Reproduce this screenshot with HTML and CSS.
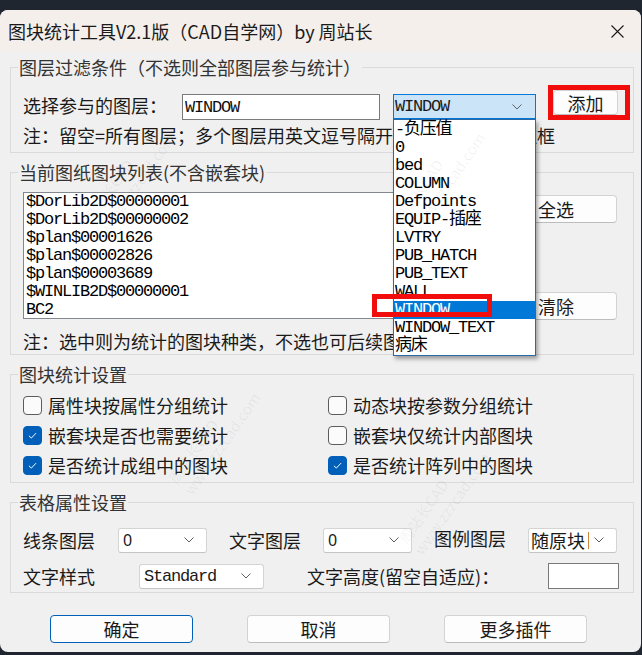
FILE: index.html
```html
<!DOCTYPE html>
<html lang="zh-CN">

<head>
    <meta charset="UTF-8">
    <meta name="viewport" content="width=device-width, initial-scale=1.0">
    <title>图块统计工具V2.1版</title>
    <link rel="stylesheet" href="styles.css">
</head>

<body>
    <div class="window">
        <div class="titlebar">
            <span class="title">图块统计工具V2.1版（CAD自学网）by 周站长</span>
            <svg class="close" viewBox="0 0 13 13"><path d="M0.5 0.5L12.5 12.5M12.5 0.5L0.5 12.5" /></svg>
        </div>

        <div class="content">
            <fieldset class="group g-filter">
                <legend>图层过滤条件（不选则全部图层参与统计）</legend>
                <div class="layer-row">
                    <span class="lbl">选择参与的图层：</span>
                    <input class="text-input" type="text" value="WINDOW">
                    <div class="combo combo-open">
                        <span class="mono">WINDOW</span>
                        <svg class="chev" viewBox="0 0 10 6"><path d="M0.5 0.5L5 5L9.5 0.5" /></svg>
                        <ul class="dropdown">
                            <li>-负压值</li>
                            <li>0</li>
                            <li>bed</li>
                            <li>COLUMN</li>
                            <li>Defpoints</li>
                            <li>EQUIP-插座</li>
                            <li>LVTRY</li>
                            <li>PUB_HATCH</li>
                            <li>PUB_TEXT</li>
                            <li>WALL</li>
                            <li class="selected">WINDOW<span class="mark mark-item"></span></li>
                            <li>WINDOW_TEXT</li>
                            <li>病床</li>
                        </ul>
                    </div>
                    <button class="btn btn-add">添加<span class="mark mark-add"></span></button>
                </div>
                <div class="note">注：留空=所有图层；多个图层用英文逗号隔开，也可用右侧下拉框</div>
            </fieldset>

            <fieldset class="group g-blocks">
                <legend>当前图纸图块列表(不含嵌套块)</legend>
                <div class="blocks-row">
                    <ul class="listbox">
                        <li>$DorLib2D$00000001</li>
                        <li>$DorLib2D$00000002</li>
                        <li>$plan$00001626</li>
                        <li>$plan$00002826</li>
                        <li>$plan$00003689</li>
                        <li>$WINLIB2D$00000001</li>
                        <li>BC2</li>
                    </ul>
                    <div class="side-btns">
                        <button class="btn">全选</button>
                        <button class="btn">清除</button>
                    </div>
                </div>
                <div class="note note-blocks">注：选中则为统计的图块种类，不选也可后续图中框选</div>
            </fieldset>

            <fieldset class="group g-stats">
                <legend>图块统计设置</legend>
                <div class="checks">
                    <label class="check"><span class="box"></span>属性块按属性分组统计</label>
                    <label class="check"><span class="box"></span>动态块按参数分组统计</label>
                    <label class="check"><span class="box on"><svg viewBox="0 0 19 19"><path d="M5.5 9.8L8.2 12.4L13.5 6.8" /></svg></span>嵌套块是否也需要统计</label>
                    <label class="check"><span class="box"></span>嵌套块仅统计内部图块</label>
                    <label class="check"><span class="box on"><svg viewBox="0 0 19 19"><path d="M5.5 9.8L8.2 12.4L13.5 6.8" /></svg></span>是否统计成组中的图块</label>
                    <label class="check"><span class="box on"><svg viewBox="0 0 19 19"><path d="M5.5 9.8L8.2 12.4L13.5 6.8" /></svg></span>是否统计阵列中的图块</label>
                </div>
            </fieldset>

            <fieldset class="group g-table">
                <legend>表格属性设置</legend>
                <div class="form-row">
                    <span class="flbl w95">线条图层</span>
                    <div class="combo small"><span class="num">0</span><svg class="chev" viewBox="0 0 10 6"><path d="M0.5 0.5L5 5L9.5 0.5" /></svg></div>
                    <span class="flbl w94 ml22">文字图层</span>
                    <div class="combo small"><span class="num">0</span><svg class="chev" viewBox="0 0 10 6"><path d="M0.5 0.5L5 5L9.5 0.5" /></svg></div>
                    <span class="flbl w94 ml22 raise">图例图层</span>
                    <div class="combo small"><span class="cjk">随原块<i class="caret"></i></span><svg class="chev" viewBox="0 0 10 6"><path d="M0.5 0.5L5 5L9.5 0.5" /></svg></div>
                </div>
                <div class="form-row">
                    <span class="flbl w116">文字样式</span>
                    <div class="combo wide"><span class="mono">Standard</span><svg class="chev" viewBox="0 0 10 6"><path d="M0.5 0.5L5 5L9.5 0.5" /></svg></div>
                    <span class="flbl w241 ml43">文字高度(留空自适应)：</span>
                    <input class="height-input" type="text" value="">
                </div>
            </fieldset>

            <div class="footer">
                <button class="btn btn-main btn-default">确定</button>
                <button class="btn btn-main">取消</button>
                <button class="btn btn-main">更多插件</button>
            </div>
        </div>

        <div class="wm wm-a">周站长CAD<br>www.zzzcad.com</div>
        <div class="wm wm-b">周站长CAD<br>www.zzzcad.com</div>
        <div class="wm wm-c">周站长CAD<br>www.zzzcad.com</div>
        <div class="wm wm-d">周站长CAD<br>www.zzzcad.com</div>
    </div>
</body>

</html>
```

FILE: styles.css
```css
* {
    box-sizing: border-box;
}

body {
    margin: 0;
    height: 655px;
    overflow: hidden;
    background-color: #1f2630;
    font-family: "Noto Sans CJK SC", sans-serif;
    color: #1a1a1a;
}

.window {
    position: relative;
    width: 641px;
    height: 642px;
    margin-top: 10px;
    background-color: #f0f0f0;
    border-radius: 8px;
    overflow: hidden;
}

.titlebar {
    height: 42px;
    background-color: #f5efec;
    display: flex;
    align-items: center;
    justify-content: space-between;
    padding: 0 17px 0 8px;
}

.title {
    font-size: 18px;
    line-height: 24px;
    white-space: nowrap;
}

.close {
    width: 13px;
    height: 13px;
    fill: none;
    stroke: #1a1a1a;
    stroke-width: 1.1;
}

.content {
    padding: 3px 7px 0 10px;
}

/* group boxes */
.group {
    margin: 0 0 7px;
    padding: 0 12px;
    border: 1px solid #dadada;
    min-width: 0;
}

.group legend {
    font-size: 18px;
    line-height: 24px;
    color: #333;
    padding: 0 1px;
    margin-left: -5px;
}

.mono,
.text-input,
.listbox,
.dropdown {
    font-family: "Liberation Mono", "Noto Sans CJK SC", monospace;
    font-size: 17px;
    letter-spacing: -1.2px;
}

.g-filter {
    padding-top: 11px;
    padding-bottom: 5px;
}

.layer-row {
    display: flex;
    align-items: flex-start;
    height: 30px;
}

.lbl {
    width: 159px;
    font-size: 18px;
    line-height: 30px;
    white-space: nowrap;
}

.text-input {
    width: 198px;
    height: 26px;
    margin: 4px 0 0;
    padding: 0 2px;
    border: 1px solid #7a7a7a;
    border-radius: 0;
    background: #fff;
    color: #111;
    outline: none;
}

.combo {
    position: relative;
    display: flex;
    align-items: center;
    justify-content: space-between;
    height: 25px;
    padding: 0 12px 0 4px;
    background: #fff;
    border: 1px solid #d4d4d4;
    border-bottom-color: #c4c4c4;
    border-radius: 3px;
}

.combo-open {
    width: 143px;
    margin: 4px 0 0 13px;
    padding: 0 13px 0 1px;
    background: #cce4f7;
    border: 1px solid #0078d7;
    border-radius: 0;
}

.chev {
    width: 10px;
    height: 6px;
    fill: none;
    stroke: #606060;
    stroke-width: 1;
}

.dropdown {
    position: absolute;
    left: -1px;
    top: 24px;
    width: 143px;
    margin: 0;
    padding: 1px 0 0;
    list-style: none;
    background: #fff;
    border: 1px solid #2d6aa5;
    box-shadow: 2px 3px 4px rgba(0, 0, 0, 0.35);
    z-index: 10;
    line-height: 18px;
}

.dropdown li {
    position: relative;
    height: 18px;
    padding-left: 1px;
    white-space: nowrap;
    color: #000;
}

.dropdown li.selected {
    background: #0078d7;
    color: #fff;
}

.mark {
    position: absolute;
    border: 5px solid #f20d0d;
    z-index: 11;
}

.mark-item {
    left: -22px;
    top: -7px;
    width: 120px;
    height: 23px;
}

.mark-add {
    left: -6px;
    top: -6px;
    width: 82px;
    height: 35px;
}

.btn {
    height: 25px;
    padding: 0;
    border: 1px solid #d3d3d3;
    border-bottom-color: #bdbdbd;
    border-radius: 4px;
    background: #fdfdfd;
    font-family: "Noto Sans CJK SC", sans-serif;
    font-size: 18px;
    line-height: 1;
    color: #1a1a1a;
}

.btn-add {
    position: relative;
    width: 65px;
    margin-left: 17px;
}

.note {
    font-size: 18px;
    line-height: 24px;
    margin-top: 3px;
    white-space: nowrap;
}

/* block list */
.g-blocks {
    padding-top: 8px;
    padding-bottom: 1px;
}

.blocks-row {
    display: flex;
}

.listbox {
    width: 460px;
    height: 127px;
    margin: 0;
    padding: 0 2px;
    list-style: none;
    background: #fff;
    border: 1px solid #828790;
    line-height: 18px;
    color: #000;
}

.side-btns {
    display: flex;
    flex-direction: column;
    justify-content: space-between;
    height: 125px;
    margin: 3px 0 0 12px;
}

.side-btns .btn {
    width: 122px;
    height: 28px;
}

.note-blocks {
    margin-top: 9px;
}

/* check boxes */
.g-stats {
    padding-top: 4px;
    padding-bottom: 2px;
}

.checks {
    display: grid;
    grid-template-columns: 305px 1fr;
    grid-auto-rows: 30px;
}

.check {
    display: flex;
    align-items: center;
    font-size: 18px;
    white-space: nowrap;
}

.box {
    width: 19px;
    height: 19px;
    margin-right: 6px;
    border: 1px solid #5c5c5c;
    border-radius: 4px;
    background: #fbfbfb;
}

.box.on {
    background: #005fb8;
    border-color: #005fb8;
}

.box svg {
    display: block;
    width: 17px;
    height: 17px;
    fill: none;
    stroke: #fff;
    stroke-width: 1.1;
}

/* table settings */
.g-table {
    padding-top: 13px;
    padding-bottom: 3px;
}

.form-row {
    display: flex;
    align-items: center;
    height: 26px;
}

.form-row + .form-row {
    margin-top: 10px;
}

.flbl {
    font-size: 18px;
    line-height: 24px;
    white-space: nowrap;
}

.w94 { width: 94px; }
.w95 { width: 95px; }
.w116 { width: 116px; }
.w241 { width: 241px; }
.ml22 { margin-left: 22px; }
.ml43 { margin-left: 43px; }

.raise {
    margin-bottom: 5px;
}

.combo.small {
    width: 89px;
}

.combo.wide {
    width: 125px;
}

.num {
    font-family: "Noto Sans", sans-serif;
    font-size: 16px;
}

.cjk {
    display: flex;
    align-items: center;
    margin-left: -2px;
    font-size: 18px;
}

.caret {
    display: inline-block;
    width: 1px;
    height: 17px;
    margin-left: 3px;
    background: #d0843a;
}

.height-input {
    width: 71px;
    height: 26px;
    margin: 0;
    border: 1px solid #7a7a7a;
    border-radius: 0;
    background: #fff;
    outline: none;
}

/* bottom buttons */
.footer {
    display: flex;
    gap: 54px;
    padding: 15px 0 0 40px;
}

.btn-main {
    width: 143px;
    height: 28px;
}

.btn-default {
    border-color: #005fb8;
}

/* watermark */
.wm {
    position: absolute;
    transform: rotate(-55deg);
    transform-origin: left bottom;
    font-size: 15px;
    line-height: 19px;
    color: rgba(0, 0, 0, 0.06);
    white-space: nowrap;
    pointer-events: none;
    z-index: 20;
}

.wm-a { left: 110px; top: 190px; }
.wm-b { left: 420px; top: 190px; }
.wm-c { left: 195px; top: 450px; }
.wm-d { left: 425px; top: 510px; }
```
